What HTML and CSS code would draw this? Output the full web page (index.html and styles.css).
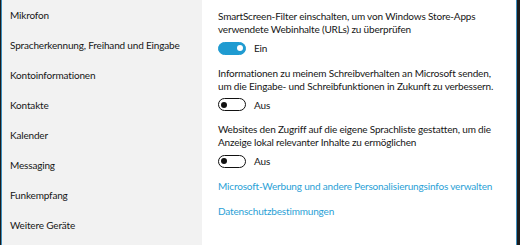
FILE: index.html
```html
<!DOCTYPE html>
<html lang="de">
<head>
<meta charset="utf-8">
<title>Datenschutz</title>
<link rel="stylesheet" href="styles.css">
</head>
<body>
<div class="window">
  <nav class="sidebar">
    <div class="nav-item">Mikrofon</div>
    <div class="nav-item">Spracherkennung, Freihand und Eingabe</div>
    <div class="nav-item">Kontoinformationen</div>
    <div class="nav-item">Kontakte</div>
    <div class="nav-item">Kalender</div>
    <div class="nav-item">Messaging</div>
    <div class="nav-item">Funkempfang</div>
    <div class="nav-item">Weitere Geräte</div>
  </nav>
  <main class="content">
    <section class="setting">
      <p class="desc">SmartScreen-Filter einschalten, um von Windows Store-Apps<br>verwendete Webinhalte (URLs) zu überprüfen</p>
      <div class="toggle-row"><span class="toggle on"><span class="knob"></span></span><span class="state">Ein</span></div>
    </section>
    <section class="setting">
      <p class="desc">Informationen zu meinem Schreibverhalten an Microsoft senden,<br>um die Eingabe- und Schreibfunktionen in Zukunft zu verbessern.</p>
      <div class="toggle-row"><span class="toggle"><span class="knob"></span></span><span class="state">Aus</span></div>
    </section>
    <section class="setting">
      <p class="desc">Websites den Zugriff auf die eigene Sprachliste gestatten, um die<br>Anzeige lokal relevanter Inhalte zu ermöglichen</p>
      <div class="toggle-row"><span class="toggle"><span class="knob"></span></span><span class="state">Aus</span></div>
    </section>
    <a class="link" href="#">Microsoft-Werbung und andere Personalisierungsinfos verwalten</a>
    <a class="link" href="#">Datenschutzbestimmungen</a>
  </main>
</div>
</body>
</html>
```
FILE: styles.css
```css
html, body {
  margin: 0;
  padding: 0;
  height: 100%;
}
body {
  background: #1c1c1c;
  font-family: Lato, "Noto Sans", sans-serif;
  font-size: 10px;
  letter-spacing: -0.17px;
  color: #161616;
}
.window {
  display: flex;
  height: 245px;
  margin: 0 3px 0 1px;
  border-left: 1px solid #3d8fbf;
  border-right: 1px solid #3d8fbf;
  overflow: hidden;
}
.sidebar {
  width: 200px;
  flex: none;
  background: #f2f2f2;
  display: flex;
  flex-direction: column;
}
.nav-item {
  height: 30px;
  line-height: 30px;
  padding-left: 8px;
  white-space: nowrap;
}
.content {
  flex: 1;
  background: #fff;
  padding: 10px 0 0 16px;
  display: flex;
  flex-direction: column;
  gap: 12.5px;
}
.setting {
  display: flex;
  flex-direction: column;
  gap: 6px;
}
.desc {
  margin: 0;
  line-height: 13px;
  white-space: nowrap;
}
.toggle-row {
  display: flex;
  align-items: center;
  height: 12px;
  gap: 8px;
}
.toggle {
  box-sizing: border-box;
  width: 28px;
  height: 13px;
  border-radius: 7px;
  border: 1.5px solid #111;
  display: flex;
  align-items: center;
  padding: 0 2px;
}
.toggle .knob {
  width: 6px;
  height: 6px;
  border-radius: 50%;
  background: #111;
}
.toggle.on {
  background: #1f9bd1;
  border-color: #1f9bd1;
  justify-content: flex-end;
}
.toggle.on .knob {
  background: #fff;
}
.state {
  line-height: 12px;
}
.link {
  color: #2a9fd6;
  text-decoration: none;
  line-height: 13px;
  align-self: flex-start;
}
```
